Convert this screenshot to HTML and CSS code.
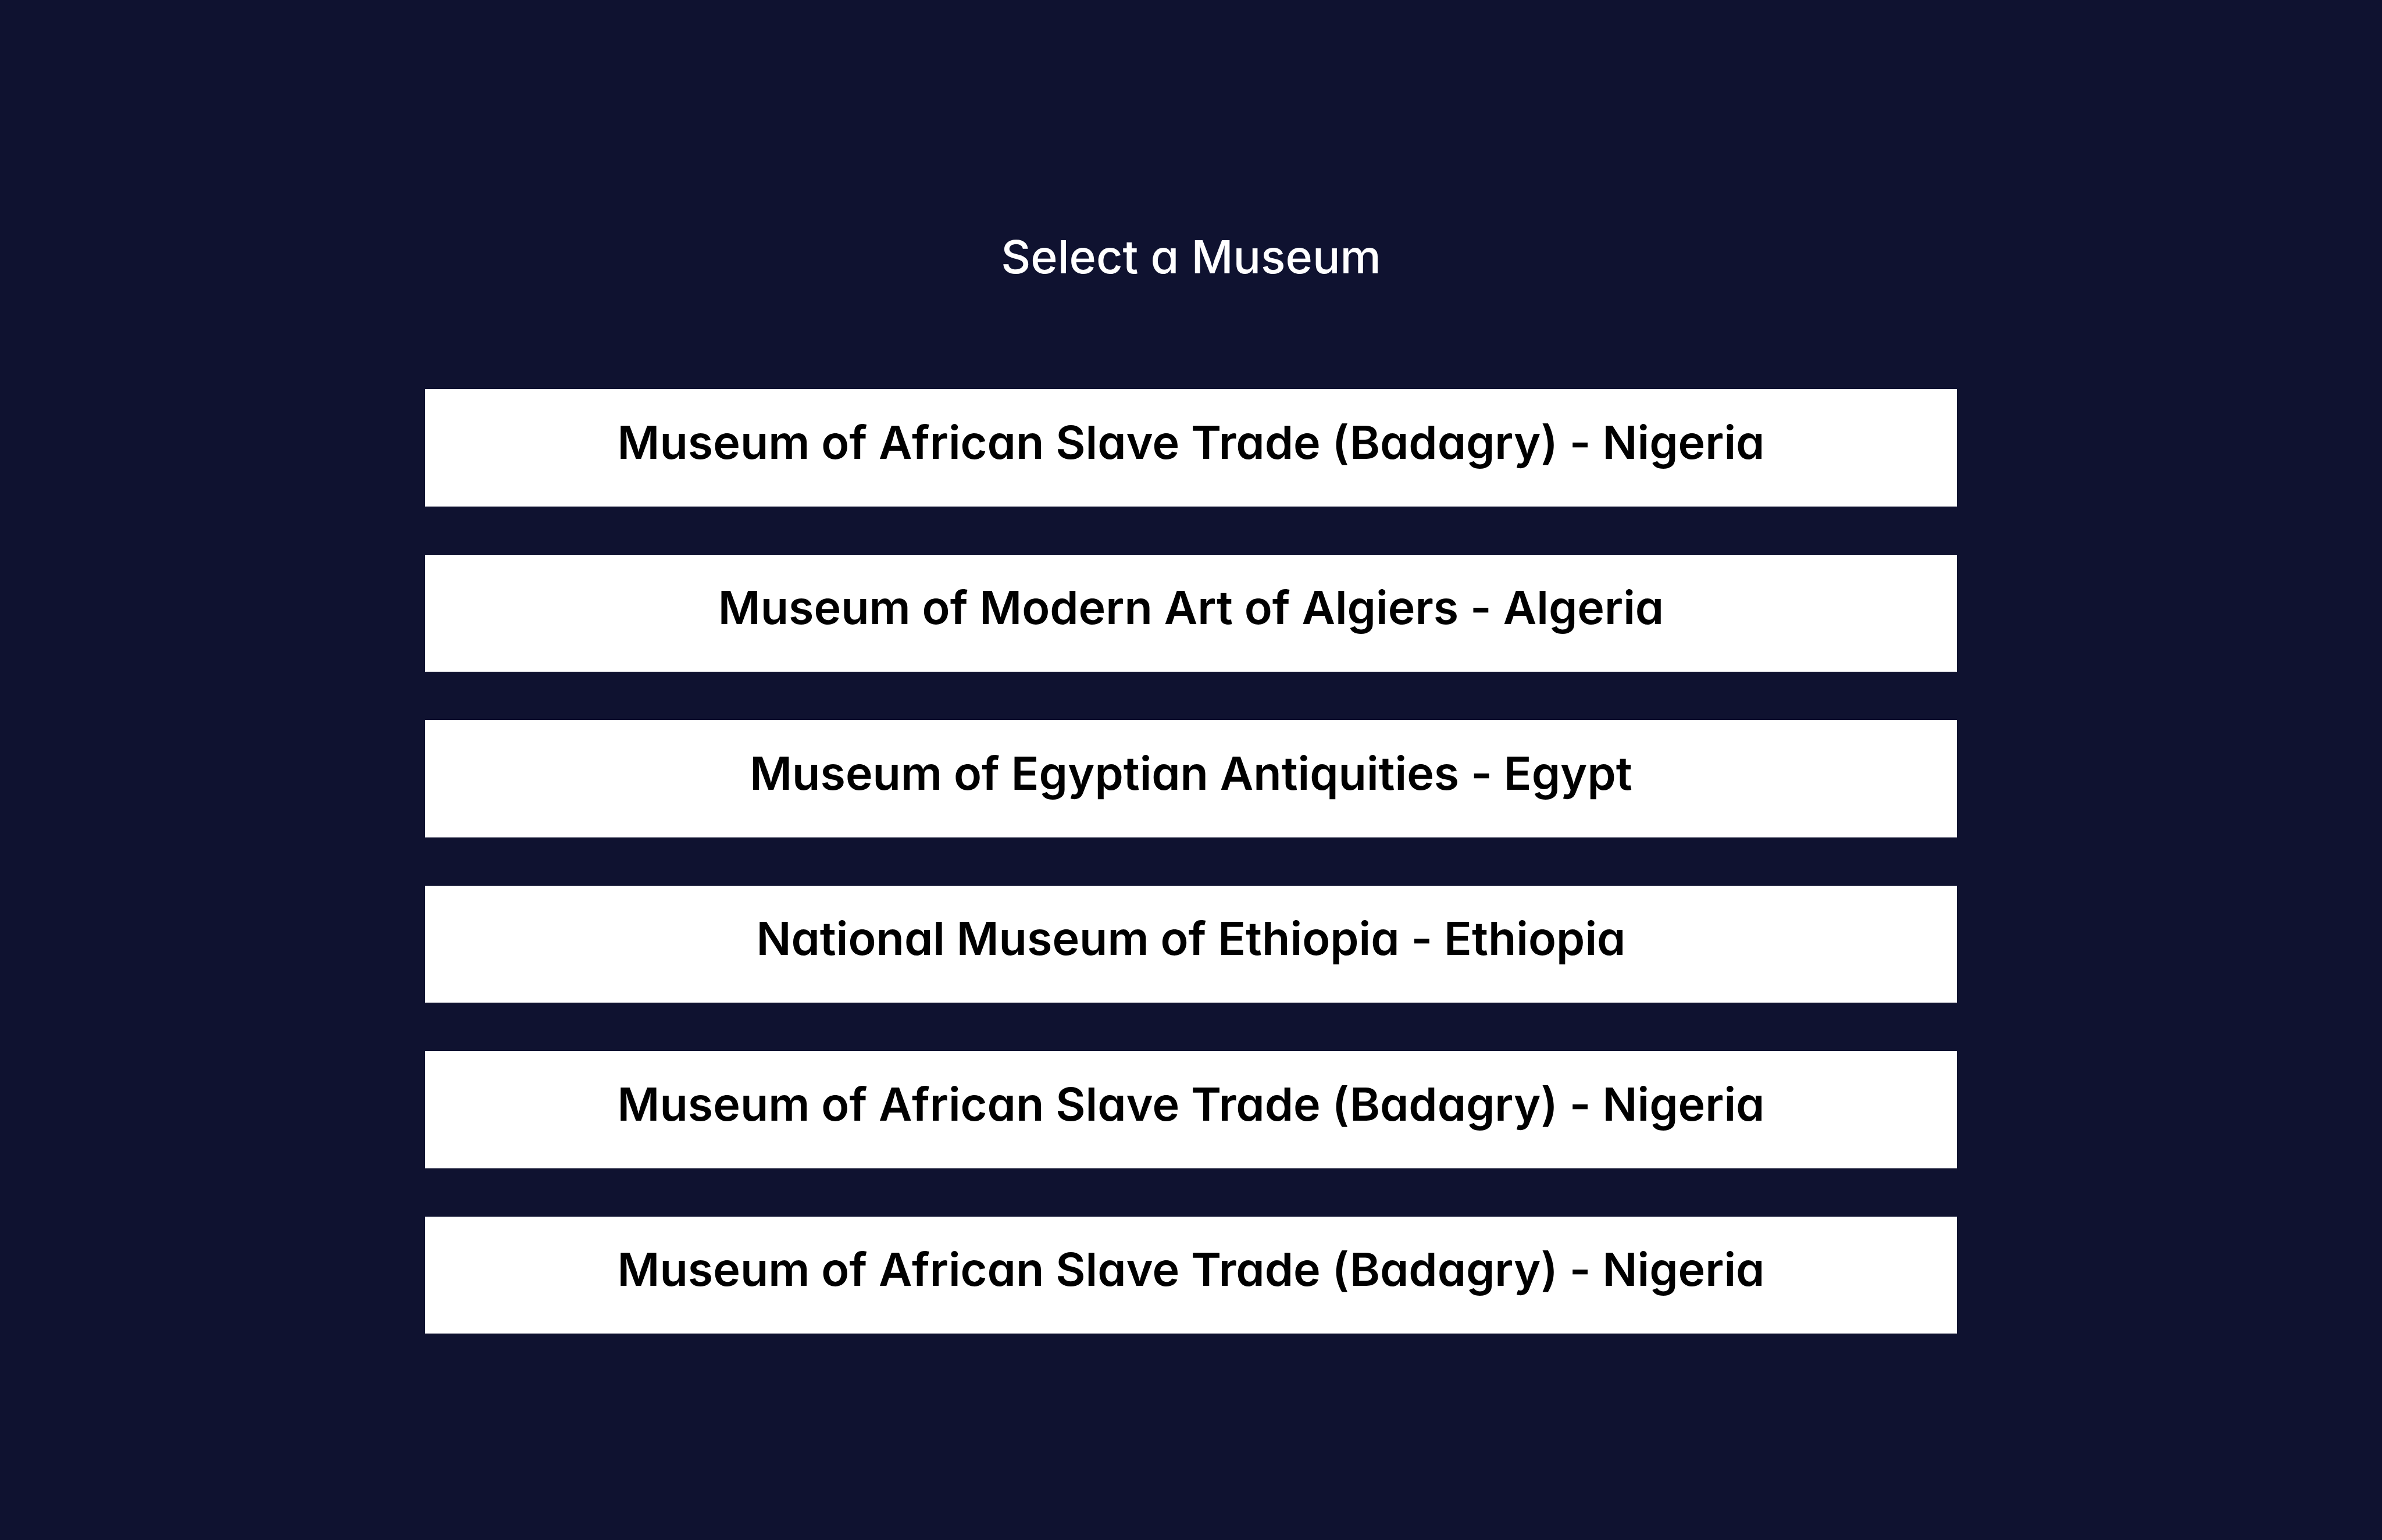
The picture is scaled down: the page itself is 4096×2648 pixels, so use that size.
FILE: index.html
```html
<!DOCTYPE html>
<html lang="en">
<head>
<meta charset="utf-8">
<title>Select a Museum</title>
<link rel="stylesheet" href="styles.css">
</head>
<body>
<main class="picker">
  <h1 class="picker-title">Select a Museum</h1>
  <div class="museum-list">
    <button class="museum" type="button">Museum of African Slave Trade (Badagry) - Nigeria</button>
    <button class="museum" type="button">Museum of Modern Art of Algiers - Algeria</button>
    <button class="museum" type="button">Museum of Egyptian Antiquities - Egypt</button>
    <button class="museum" type="button">National Museum of Ethiopia - Ethiopia</button>
    <button class="museum" type="button">Museum of African Slave Trade (Badagry) - Nigeria</button>
    <button class="museum" type="button">Museum of African Slave Trade (Badagry) - Nigeria</button>
  </div>
</main>
</body>
</html>
```
FILE: styles.css
```css
* {
  box-sizing: border-box;
}

body {
  margin: 0;
  background: #0f1230;
  font-family: Inter, "Noto Sans", sans-serif;
  /* single-storey a, hyphens kept at their normal height */
  font-feature-settings: "cv11", "calt" 0;
}

.picker {
  display: flex;
  flex-direction: column;
  align-items: center;
  gap: 180px;
  min-height: 100vh;
  padding: 393px 0 355px;
}

.picker-title {
  margin: 0;
  color: #fff;
  font-size: 79px;
  font-weight: 500;
  line-height: 96px;
}

.museum-list {
  flex: 1;
  display: grid;
  grid-auto-rows: 1fr;
  gap: 83px;
  width: 64.3%;
}

.museum {
  padding: 0 32px 20px;
  border: 0;
  background: #fff;
  color: #000;
  font-family: inherit;
  font-feature-settings: inherit;
  font-size: 79px;
  font-weight: 600;
  line-height: 96px;
  text-align: center;
  cursor: pointer;
}
```
